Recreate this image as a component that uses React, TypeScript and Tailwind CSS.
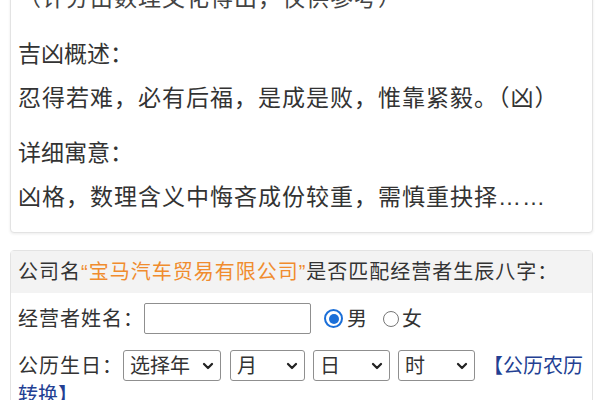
import { ChevronDown } from "lucide-react"

const font = { fontFamily: '"Liberation Sans", "Noto Sans CJK SC", sans-serif' }

function FakeSelect({ label, width }: { label: string; width: string }) {
  return (
    <div
      className={`${width} h-[31px] flex items-center justify-between border border-[#8f8f8f] rounded-[3px] bg-white pl-[6px] pr-[4px] text-[20px] text-[#333]`}
    >
      <span className="leading-none">{label}</span>
      <ChevronDown size={16} strokeWidth={3.4} className="text-[#222]" />
    </div>
  )
}

export default function App() {
  return (
    <div className="w-[600px] h-[400px] overflow-hidden bg-white text-[#333]" style={font}>
      <div className="pl-[10px] pr-[7px]">
        {/* 数理分析卡片 */}
        <div className="-mt-[34px] border border-[#e3e3e3] rounded-[4px] bg-white shadow-[0_1px_3px_rgba(0,0,0,0.08)] px-[7px] pt-[10px] pb-[14px] text-[23px]">
          <p className="leading-[42px] text-[#444] tracking-[1px]">（计分由数理文化得出，仅供参考）</p>
          <p className="mt-[14px] leading-[42px]">吉凶概述：</p>
          <p className="mt-[2px] leading-[42px] tracking-[1px]">忍得若难，必有后福，是成是败，惟靠紧毅。（凶）</p>
          <p className="mt-[13px] leading-[42px]">详细寓意：</p>
          <p className="mt-[2px] leading-[42px] tracking-[1px]">凶格，数理含义中悔吝成份较重，需慎重抉择……</p>
        </div>

        {/* 八字匹配卡片 */}
        <div className="mt-[17px] border border-[#e3e3e3] rounded-[4px] bg-white">
          <div className="h-[42px] flex items-center bg-[#f3f3f3] px-[7px] text-[20px] tracking-[1px] whitespace-nowrap">
            公司名<span className="text-[#f08c2e]">“宝马汽车贸易有限公司”</span>是否匹配经营者生辰八字：
          </div>

          <div className="px-[7px]">
            <div className="mt-[10px] flex items-center h-[31px] text-[20px]">
              <span className="tracking-[1px]">经营者姓名：</span>
              <div className="w-[167px] h-[31px] border border-[#8f8f8f] rounded-[2px] bg-white" />
              <span className="ml-[13px] w-[19px] h-[19px] rounded-full border-2 border-[#1b6fd8] flex items-center justify-center">
                <span className="w-[10px] h-[10px] rounded-full bg-[#1b6fd8]" />
              </span>
              <span className="ml-[4px]">男</span>
              <span className="ml-[16px] w-[16px] h-[16px] rounded-full border border-[#767676]" />
              <span className="ml-[3px]">女</span>
            </div>

            <div className="mt-[16px] flex items-center h-[31px] text-[20px]">
              <span className="tracking-[1px]">公历生日：</span>
              <FakeSelect label="选择年" width="w-[98px]" />
              <div className="ml-[9px]">
                <FakeSelect label="月" width="w-[75px]" />
              </div>
              <div className="ml-[8px]">
                <FakeSelect label="日" width="w-[77px]" />
              </div>
              <div className="ml-[8px]">
                <FakeSelect label="时" width="w-[77px]" />
              </div>
              <span className="ml-[8px] text-[#233f93] whitespace-nowrap">【公历农历</span>
            </div>
            <div className="mt-[2px] leading-[24px] text-[20px] text-[#233f93]">转换】</div>
          </div>
        </div>
      </div>
    </div>
  )
}
